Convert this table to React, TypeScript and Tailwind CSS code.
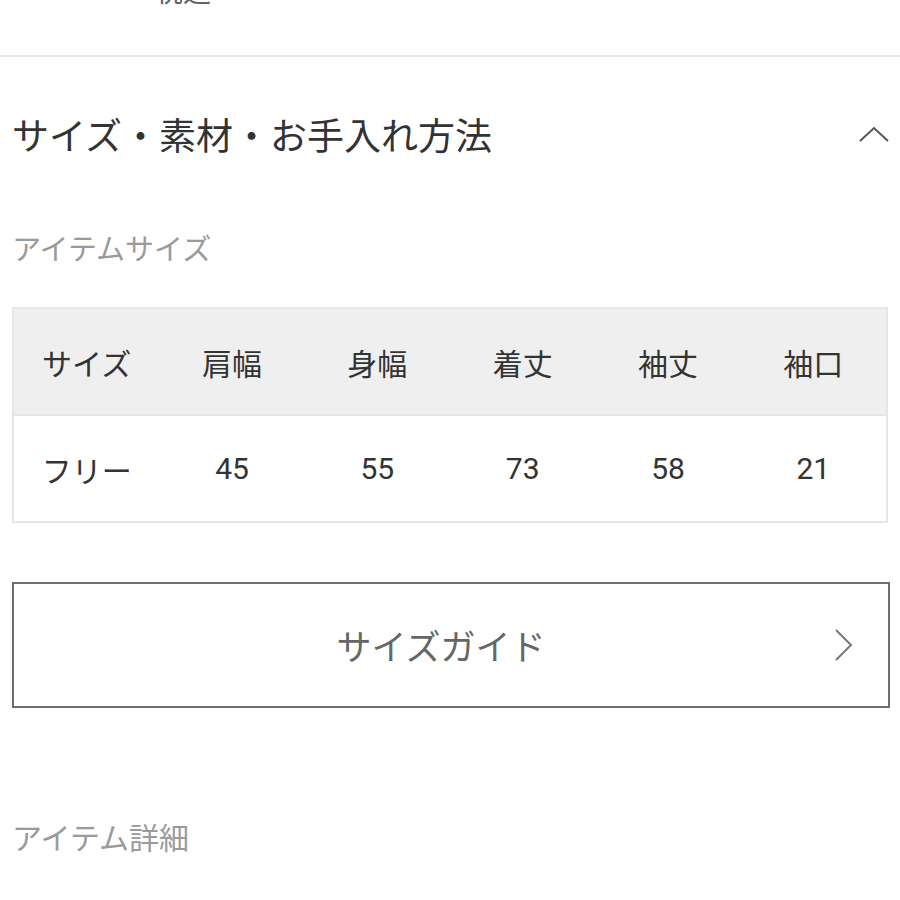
const heads = ["サイズ", "肩幅", "身幅", "着丈", "袖丈", "袖口"];
const vals = ["フリー", "45", "55", "73", "58", "21"];

export default function App() {
  return (
    <div className="w-[900px] h-[900px] overflow-hidden bg-white font-['Noto_Sans_CJK_JP','Noto_Sans',sans-serif]">
      <div className="h-[55px] overflow-hidden pl-[155px]">
        <p className="-mt-[26px] text-[28px] leading-[32px] text-[#666]">税込</p>
      </div>
      <div className="h-[2px] bg-[#e9e9e9]" />

      <div className="px-[12px]">
        <div className="mt-[59px] flex items-center justify-between">
          <h2 className="text-[37px] leading-[36px] text-[#333]">サイズ・素材・お手入れ方法</h2>
          <svg width="30" height="16" viewBox="0 0 30 16" className="mr-[-1px]">
            <polyline points="1,15 15,2 29,15" fill="none" stroke="#555" strokeWidth="2" />
          </svg>
        </div>

        <p className="mt-[81px] text-[29px] leading-[29px] text-[#9a9a9a]">アイテムサイズ</p>

        <div className="mt-[45px] border-2 border-[#e6e6e6]">
          <div className="grid grid-cols-6 h-[107px] items-center bg-[#efefef] border-b-2 border-[#e6e6e6]">
            {heads.map((h) => (
              <div key={h} className="text-center text-[30px] leading-[30px] text-[#333]">{h}</div>
            ))}
          </div>
          <div className="grid grid-cols-6 h-[105px] items-center">
            {vals.map((v, i) => (
              <div
                key={i}
                className={`text-center text-[30px] leading-[30px] text-[#333] ${i === 0 ? "" : "font-['Roboto',sans-serif]"}`}
              >
                {v}
              </div>
            ))}
          </div>
        </div>

        <div className="mt-[59px] -mr-[2px] h-[126px] border-2 border-[#6e6e6e] flex items-center justify-center pr-[20px] relative">
          <span className="text-[35px] leading-[34px] text-[#666]">サイズガイド</span>
          <svg width="20" height="32" viewBox="0 0 20 32" className="absolute right-[34px] top-[45px]">
            <polyline points="2,1 17,16 2,31" fill="none" stroke="#777" strokeWidth="2" />
          </svg>
        </div>

        <p className="mt-[113px] text-[30px] leading-[30px] text-[#9a9a9a]">アイテム詳細</p>
      </div>
    </div>
  );
}
